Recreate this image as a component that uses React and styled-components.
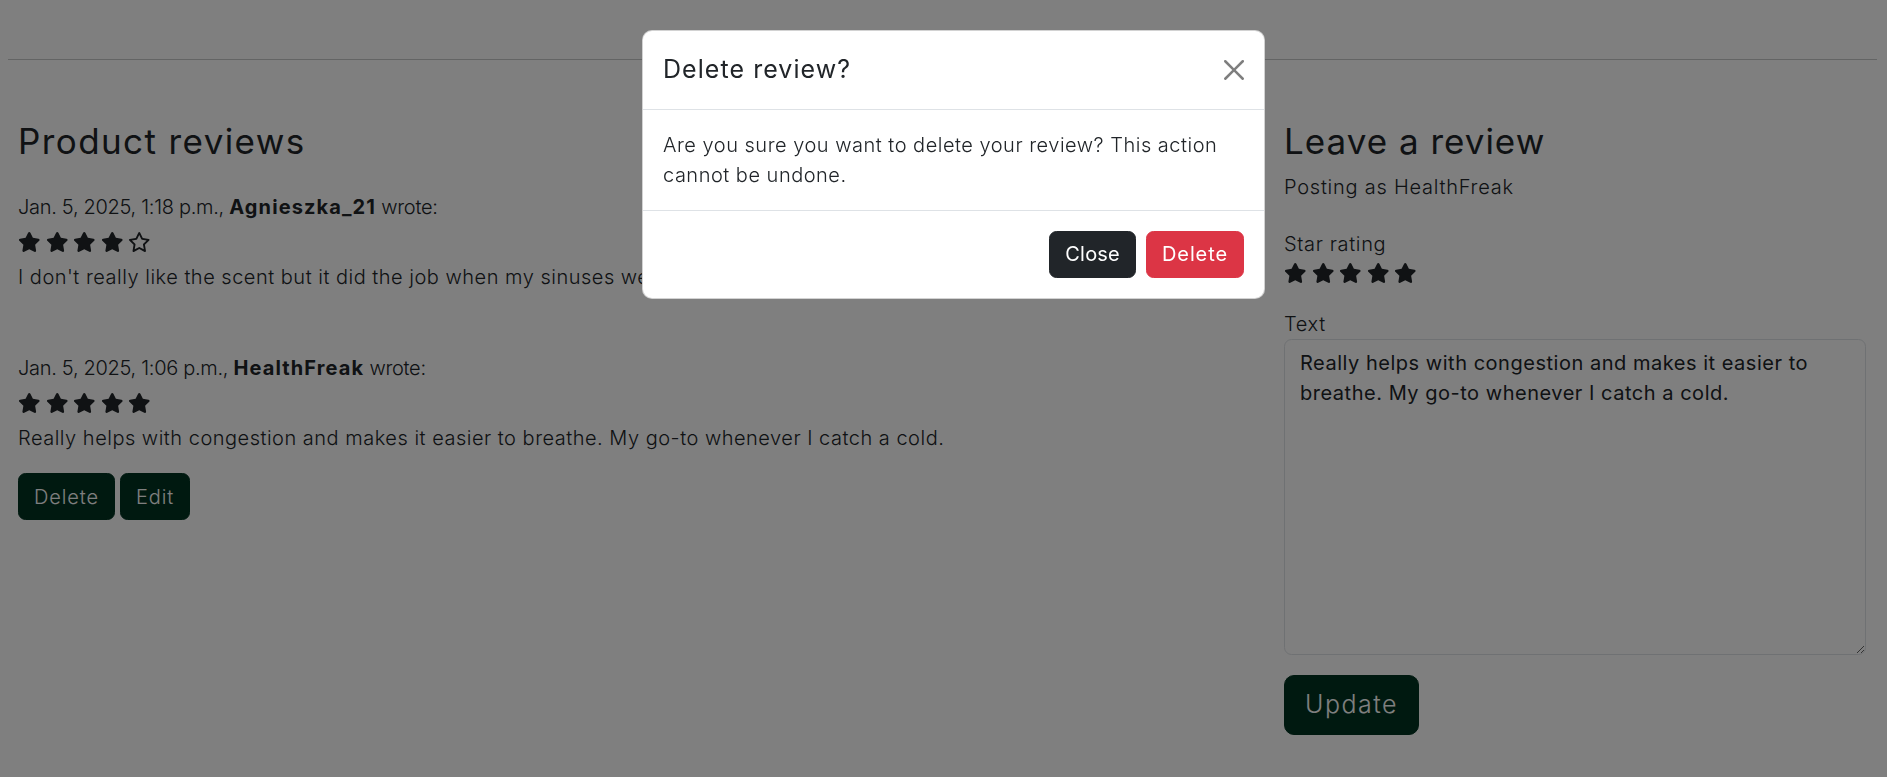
import React from "react";
import styled, { createGlobalStyle } from "styled-components";
import { FaStar, FaRegStar } from "react-icons/fa6";

const GlobalStyle = createGlobalStyle`
  html, body {
    margin: 0;
    padding: 0;
    background: #fff;
  }
  body {
    font-family: Inter, "Open Sans", "Liberation Sans", sans-serif;
    font-weight: 300;
    font-size: 20px;
    line-height: 1.5;
    letter-spacing: 0.5px;
    color: #212529;
    overflow: hidden;
  }
  * { box-sizing: border-box; }
`;

const reviews = [
  {
    date: "Jan. 5, 2025, 1:18 p.m.,",
    user: "Agnieszka_21",
    rating: 4,
    text: "I don't really like the scent but it did the job when my sinuses were blocked.",
    own: false,
  },
  {
    date: "Jan. 5, 2025, 1:06 p.m.,",
    user: "HealthFreak",
    rating: 5,
    text: "Really helps with congestion and makes it easier to breathe. My go-to whenever I catch a cold.",
    own: true,
  },
];

const Stars = ({ value }) => (
  <StarRow>
    {[1, 2, 3, 4, 5].map((n) => (n <= value ? <FaStar key={n} /> : <FaRegStar key={n} />))}
  </StarRow>
);

const App = () => {
  return (
    <>
      <GlobalStyle />
      <Page>
        <TopBar />
        <Rule />
        <Main>
          <ReviewList>
            <Heading $wide>Product reviews</Heading>
            {reviews.map((r, i) => (
              <Review key={i} $last={i === reviews.length - 1}>
                <Meta>
                  {r.date} <strong>{r.user}</strong> wrote:
                </Meta>
                <Stars value={r.rating} />
                <ReviewText>{r.text}</ReviewText>
                {r.own && (
                  <Actions>
                    <GreenButton>Delete</GreenButton>
                    <GreenButton>Edit</GreenButton>
                  </Actions>
                )}
              </Review>
            ))}
          </ReviewList>
          <Aside>
            <Heading>Leave a review</Heading>
            <Posting>Posting as HealthFreak</Posting>
            <Label>Star rating</Label>
            <Stars value={5} />
            <Label>Text</Label>
            <TextArea
              rows={10}
              defaultValue="Really helps with congestion and makes it easier to breathe. My go-to whenever I catch a cold."
            />
            <GreenButton $lg>Update</GreenButton>
          </Aside>
        </Main>
      </Page>

      <Backdrop />
      <ModalLayer>
        <Dialog>
          <ModalHeader>
            <ModalTitle>Delete review?</ModalTitle>
            <CloseX aria-label="Close">
              <svg viewBox="0 0 16 16" width="20" height="20" fill="#000">
                <path d="M.293.293a1 1 0 0 1 1.414 0L8 6.586 14.293.293a1 1 0 1 1 1.414 1.414L9.414 8l6.293 6.293a1 1 0 0 1-1.414 1.414L8 9.414l-6.293 6.293a1 1 0 0 1-1.414-1.414L6.586 8 .293 1.707a1 1 0 0 1 0-1.414z" />
              </svg>
            </CloseX>
          </ModalHeader>
          <ModalBody>
            Are you sure you want to delete your review? This action cannot be undone.
          </ModalBody>
          <ModalFooter>
            <FlatButton $variant="dark">Close</FlatButton>
            <FlatButton $variant="danger">Delete</FlatButton>
          </ModalFooter>
        </Dialog>
      </ModalLayer>
    </>
  );
};

const Page = styled.div`
  height: 777px;
`;

const TopBar = styled.div`
  height: 59px;
`;

const Rule = styled.hr`
  margin: 0 10px 0 8px;
  border: 0;
  border-top: 1px solid #212529;
  opacity: 0.25;
`;

const Main = styled.main`
  display: grid;
  grid-template-columns: 1fr 582px;
  column-gap: 24px;
  padding: 60px 21px 0 18px;
`;

const ReviewList = styled.section`
  display: flex;
  flex-direction: column;
`;

const Heading = styled.h3`
  margin: 0 0 10px;
  font-size: 35px;
  font-weight: 400;
  line-height: 1.2;
  letter-spacing: ${(p) => (p.$wide ? "1.4px" : "1px")};
`;

const Review = styled.div`
  margin-top: ${(p) => (p.$last ? "0" : "20px")};
  margin-bottom: ${(p) => (p.$last ? "0" : "41px")};
`;

const Meta = styled.div`
  letter-spacing: -0.3px;
  strong {
    font-weight: 700;
    letter-spacing: 1.1px;
  }
`;

const StarRow = styled.div`
  display: flex;
  gap: 5px;
  height: 20px;
  margin: 10px 0;
  svg {
    width: 22.5px;
    height: 20px;
    color: #212529;
  }
`;

const ReviewText = styled.p`
  margin: 0 0 20px;
`;

const Actions = styled.div`
  display: flex;
  gap: 5px;
`;

const GreenButton = styled.button`
  font-family: inherit;
  font-weight: 300;
  font-size: ${(p) => (p.$lg ? "25px" : "20px")};
  letter-spacing: ${(p) => (p.$lg ? "1.5px" : "0.9px")};
  line-height: 1.5;
  padding: ${(p) => (p.$lg ? "10px 20px" : "7.5px 15px")};
  border-radius: ${(p) => (p.$lg ? "10px" : "7.5px")};
  border: 1px solid #013220;
  background: #013220;
  color: #fff;
  align-self: flex-start;
`;

const Aside = styled.aside`
  display: flex;
  flex-direction: column;
  align-items: stretch;
  ${StarRow} {
    margin: 4px 0 26px;
  }
`;

const Posting = styled.p`
  margin: 0 0 27px;
  letter-spacing: 0.75px;
`;

const Label = styled.label`
  display: block;
  margin: 0;
  letter-spacing: 0.65px;
`;

const TextArea = styled.textarea`
  display: block;
  width: 100%;
  height: 316px;
  margin: 0 0 20px;
  padding: 7.5px 15px;
  font-family: inherit;
  font-size: 20px;
  font-weight: 400;
  letter-spacing: 0.52px;
  line-height: 1.5;
  color: #212529;
  background: #fff;
  border: 1px solid #dee2e6;
  border-radius: 7.5px;
  resize: vertical;
`;

const Backdrop = styled.div`
  position: fixed;
  inset: 0;
  background: #000;
  opacity: 0.5;
`;

const ModalLayer = styled.div`
  position: fixed;
  inset: 0;
  display: flex;
  justify-content: center;
  align-items: flex-start;
  padding: 30px 0 0 20px;
`;

const Dialog = styled.div`
  width: 623px;
  background: #fff;
  border: 1px solid rgba(0, 0, 0, 0.175);
  border-radius: 10px;
  display: flex;
  flex-direction: column;
`;

const ModalHeader = styled.div`
  display: flex;
  align-items: center;
  justify-content: space-between;
  padding: 20px;
  border-bottom: 1px solid #dee2e6;
`;

const ModalTitle = styled.h5`
  margin: 0;
  font-size: 25px;
  font-weight: 400;
  line-height: 1.5;
  letter-spacing: 1.05px;
`;

const CloseX = styled.button`
  width: 30px;
  height: 30px;
  padding: 5px;
  margin: -10px -5px -10px auto;
  border: 0;
  background: transparent;
  opacity: 0.5;
  display: flex;
  align-items: center;
  justify-content: center;
`;

const ModalBody = styled.div`
  padding: 20px;
`;

const ModalFooter = styled.div`
  display: flex;
  justify-content: flex-end;
  gap: 10px;
  padding: 20px;
  border-top: 1px solid #dee2e6;
`;

const FlatButton = styled.button`
  font-family: inherit;
  font-size: 20px;
  font-weight: 400;
  letter-spacing: ${(p) => (p.$variant === "danger" ? "0.9px" : "0.2px")};
  line-height: 1.5;
  padding: 7.5px 15px;
  border-radius: 7.5px;
  color: #fff;
  border: 1px solid ${(p) => (p.$variant === "danger" ? "#dc3545" : "#212529")};
  background: ${(p) => (p.$variant === "danger" ? "#dc3545" : "#212529")};
`;

export default App;
